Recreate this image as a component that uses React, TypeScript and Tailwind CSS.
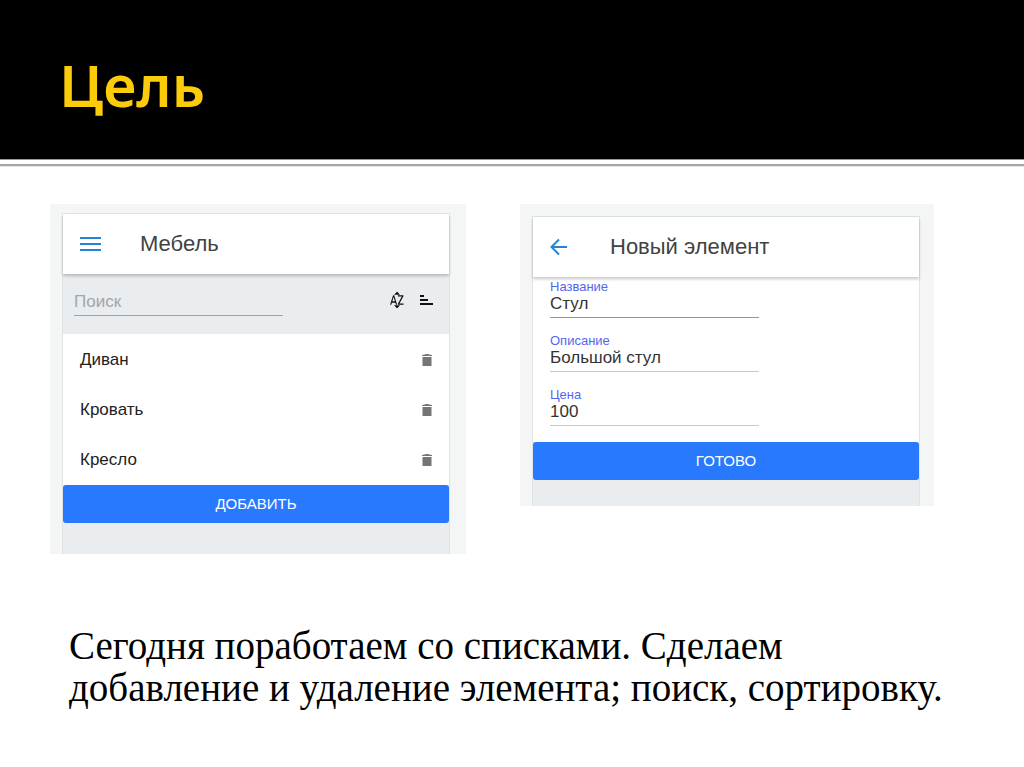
import { useState, type ReactNode } from 'react'
import { MdSortByAlpha } from 'react-icons/md'

const items = ['Диван', 'Кровать', 'Кресло']

const fields = [
  { id: 'name', label: 'Название', value: 'Стул', line: 'border-[#959595]' },
  { id: 'about', label: 'Описание', value: 'Большой стул', line: 'border-[#c8c8c8]' },
  { id: 'price', label: 'Цена', value: '100', line: 'border-[#c8c8c8]' },
]

const MenuIcon = () => (
  <svg width="22" height="16" viewBox="0 0 22 16" fill="#2583d8">
    <rect x="0" y="1" width="21" height="2" />
    <rect x="0" y="7" width="21" height="2" />
    <rect x="0" y="13" width="21" height="2" />
  </svg>
)

const BackIcon = () => (
  <svg width="18" height="18" viewBox="0 0 18 18" fill="none" stroke="#2583d8" strokeWidth="2">
    <path d="M17 9H2M9 1.5L1.5 9L9 16.5" />
  </svg>
)

const AlphaIcon = () => (
  <svg width="16" height="20" viewBox="0 0 16 20" fill="#111">
    <MdSortByAlpha preserveAspectRatio="none" className="h-5 w-4 text-[#111]" />
    <path d="M5 4.8L8 1.8L11 4.8ZM5 15.2L8 18.2L11 15.2Z" />
  </svg>
)

const BarsIcon = () => (
  <svg width="14" height="10" viewBox="0 0 14 10" fill="#111">
    <rect x="0" y="0" width="4" height="2" />
    <rect x="0" y="4" width="8" height="2" />
    <rect x="0" y="8" width="13" height="2" />
  </svg>
)

const TrashIcon = () => (
  <svg width="10" height="14" viewBox="0 0 10 14" fill="#757575">
    <path d="M0 3V2L3 1.6L3.6 1H6.4L7 1.6L10 2V3Z" />
    <path d="M0.5 4H9.5V12.5Q9.5 13 9 13H1Q0.5 13 0.5 12.5Z" />
  </svg>
)

const Toolbar = ({
  icon,
  label,
  title,
}: {
  icon: ReactNode
  label: string
  title: string
}) => (
  <div className="relative flex h-[60px] items-center bg-white pl-[17px] shadow-[0_2px_3px_rgba(0,0,0,0.22)]">
    <button type="button" aria-label={label} className="flex w-[60px]">
      {icon}
    </button>
    <h2 className="text-[22px] leading-7 text-[#424242]">{title}</h2>
  </div>
)

const Submit = ({ children }: { children: ReactNode }) => (
  <button
    type="button"
    className="h-[38px] w-full rounded-[3px] bg-[#2979ff] text-[15px] text-white"
  >
    {children}
  </button>
)

const FurnitureList = () => {
  const [search, setSearch] = useState('')
  return (
    <section className="bg-[#f4f6f6] pl-3 pr-4 pt-[9px]">
      <div className="border border-b-0 border-[#e0e3e5] bg-[#e9edf0]">
        <Toolbar icon={<MenuIcon />} label="Меню" title="Мебель" />
        <div className="flex h-[60px] items-center justify-between pl-[11px] pr-[15px]">
          <input
            type="text"
            aria-label="Поиск"
            placeholder="Поиск"
            value={search}
            onChange={(e) => setSearch(e.target.value)}
            className="-mt-1 h-7 w-[209px] border-b border-[#a0a3a6] text-[17px] outline-none placeholder:text-[#a3a6a8]"
          />
          <div className="-mt-2 flex items-center gap-[15px]">
            <button type="button" aria-label="Сортировать по алфавиту">
              <AlphaIcon />
            </button>
            <button type="button" aria-label="Сортировать по цене">
              <BarsIcon />
            </button>
          </div>
        </div>
        <ul className="bg-white pt-px">
          {items.map((item) => (
            <li
              key={item}
              className="flex h-[50px] items-center justify-between pl-[17px] pr-[17px] text-[17px] text-[#222]"
            >
              {item}
              <button type="button" aria-label={`Удалить ${item}`}>
                <TrashIcon />
              </button>
            </li>
          ))}
        </ul>
        <Submit>ДОБАВИТЬ</Submit>
        <div className="h-[31px]" />
      </div>
    </section>
  )
}

const NewItem = () => (
  <section className="bg-[#f4f6f6] pl-3 pr-[14px] pt-3">
    <div className="border border-b-0 border-[#e0e3e5] bg-[#e9edf0]">
      <Toolbar icon={<BackIcon />} label="Назад" title="Новый элемент" />
      <form className="flex flex-col gap-4 bg-white px-[17px] pb-4 pt-[3px]">
        {fields.map(({ id, label, value, line }) => (
          <div key={id} className="flex flex-col">
            <label htmlFor={id} className="text-[13px] leading-[14px] text-[#5566ee]">
              {label}
            </label>
            <input
              id={id}
              type="text"
              defaultValue={value}
              className={`h-6 w-[209px] border-b pb-1 text-[17px] leading-5 text-[#333] outline-none ${line}`}
            />
          </div>
        ))}
      </form>
      <Submit>ГОТОВО</Submit>
      <div className="h-[26px]" />
    </div>
  </section>
)

export default function App() {
  return (
    <div className="min-h-screen bg-white font-['Liberation_Sans',sans-serif]">
      <header className="border-b border-[#999] bg-black px-[59px] pb-[34px] pt-[45px]">
        <h1 className="font-['Noto_Sans',sans-serif] text-[58px] font-semibold leading-[80px] text-[#fccb0a]">
          Цель
        </h1>
      </header>
      <div className="mt-1 h-[3px] border-b border-t-2 border-b-[#e6e6e6] border-t-[#a6a6a6]" />
      <main>
        <div className="grid grid-cols-[416fr_414fr] items-start gap-[54px] pl-[50px] pr-[90px] pt-[37px]">
          <FurnitureList />
          <NewItem />
        </div>
        <p className="px-[69px] pb-14 pt-[71px] font-['Liberation_Serif',serif] text-[39px] leading-[42px] text-black">
          Сегодня поработаем со списками. Сделаем добавление и удаление
          элемента; поиск, сортировку.
        </p>
      </main>
    </div>
  )
}
